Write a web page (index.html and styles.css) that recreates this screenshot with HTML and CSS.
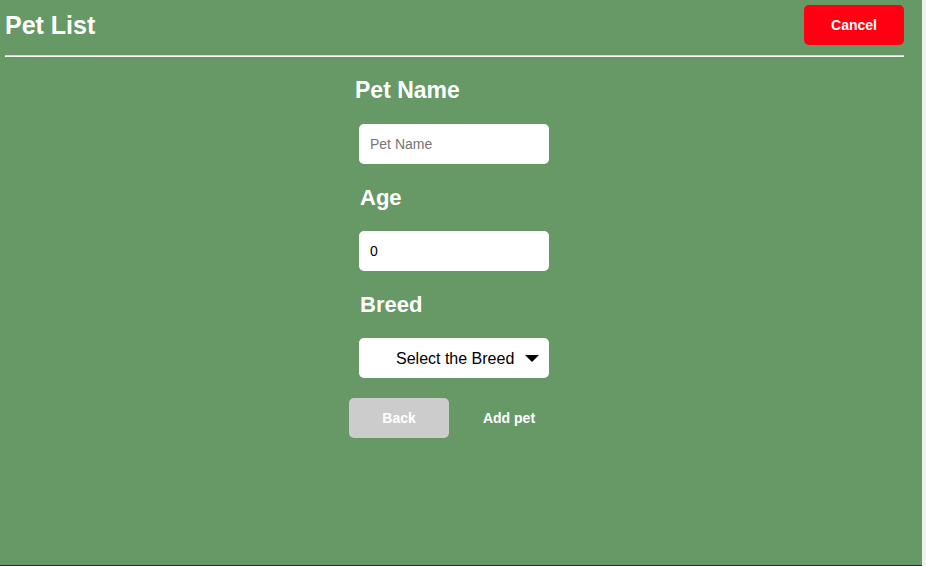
FILE: index.html
```html
<!DOCTYPE html>
<html lang="en">
<head>
<meta charset="utf-8">
<title>Pet List</title>
<link rel="stylesheet" href="styles.css">
</head>
<body>
<div class="page">
  <div class="container">
    <header class="header">
      <h1 class="title">Pet List</h1>
      <button class="btn btn-cancel" type="button">Cancel</button>
    </header>
    <hr class="divider">
    <form class="form">
      <label class="label label-first" for="name">Pet Name</label>
      <input class="field" id="name" type="text" placeholder="Pet Name">
      <label class="label" for="age">Age</label>
      <input class="field field-value" id="age" type="text" value="0">
      <label class="label" for="breed">Breed</label>
      <div class="select-wrap">
        <select class="field select" id="breed">
          <option>Select the Breed</option>
        </select>
        <svg class="caret" width="14" height="7" viewBox="0 0 14 7" aria-hidden="true"><polygon points="0,0 14,0 7,7" fill="#000"/></svg>
      </div>
      <div class="actions">
        <button class="btn btn-back" type="button">Back</button>
        <button class="btn btn-add" type="button">Add pet</button>
      </div>
    </form>
  </div>
</div>
<div class="bottom-line"></div>
</body>
</html>
```
FILE: styles.css
```css
html, body {
  margin: 0;
  padding: 0;
}
body {
  background: #f0f0f0;
  font-family: "Liberation Sans", Arial, sans-serif;
  width: 926px;
  height: 566px;
  overflow: hidden;
}
.page {
  width: 922px;
  height: 565px;
  background: #669966;
  padding-left: 5px;
  box-sizing: border-box;
}
.container {
  width: 899px;
}
.header {
  display: flex;
  justify-content: space-between;
  align-items: center;
  padding-top: 5px;
  height: 40px;
}
.title {
  margin: 0;
  font-size: 25px;
  font-weight: bold;
  color: #fff;
  line-height: 28px;
}
.btn {
  width: 100px;
  height: 40px;
  border: none;
  border-radius: 5px;
  font-family: "Liberation Sans", Arial, sans-serif;
  font-size: 14px;
  font-weight: bold;
  color: #fff;
  padding: 0;
  cursor: pointer;
}
.btn-cancel {
  background: #ff0012;
}
.divider {
  margin: 10px 0 0 0;
  height: 0;
  border: none;
  border-top: 1px solid #d6d6d6;
  border-bottom: 1px solid #ffffff;
}
.form {
  display: flex;
  flex-direction: column;
  align-items: center;
  gap: 21px;
  padding-top: 21px;
  padding-right: 1px;
}
.label {
  width: 190px;
  box-sizing: border-box;
  padding-left: 1px;
  font-size: 22px;
  font-weight: bold;
  color: #fff;
  line-height: 25px;
  height: 25px;
}
.label-first {
  font-size: 23px;
  margin-left: -5px;
  margin-right: 5px;
}
.field {
  width: 190px;
  height: 40px;
  box-sizing: border-box;
  border: none;
  border-radius: 5px;
  background: #fff;
  padding: 0 11px;
  font-family: "Liberation Sans", Arial, sans-serif;
  font-size: 14px;
  color: #000;
  outline: none;
}
.field::placeholder {
  color: #757575;
}
.select-wrap {
  position: relative;
  width: 190px;
  height: 40px;
}
.select {
  appearance: none;
  -webkit-appearance: none;
  font-size: 16px;
  padding: 0 0 0 37px;
  text-align: left;
}
.caret {
  position: absolute;
  left: 166px;
  top: 17px;
  pointer-events: none;
}
.actions {
  display: flex;
  gap: 10px;
  margin-top: -1px;
}
.btn-back {
  background: #cccccc;
}
.btn-add {
  background: transparent;
}
.bottom-line {
  width: 922px;
  height: 1px;
  background: #2a2a2a;
}
```
